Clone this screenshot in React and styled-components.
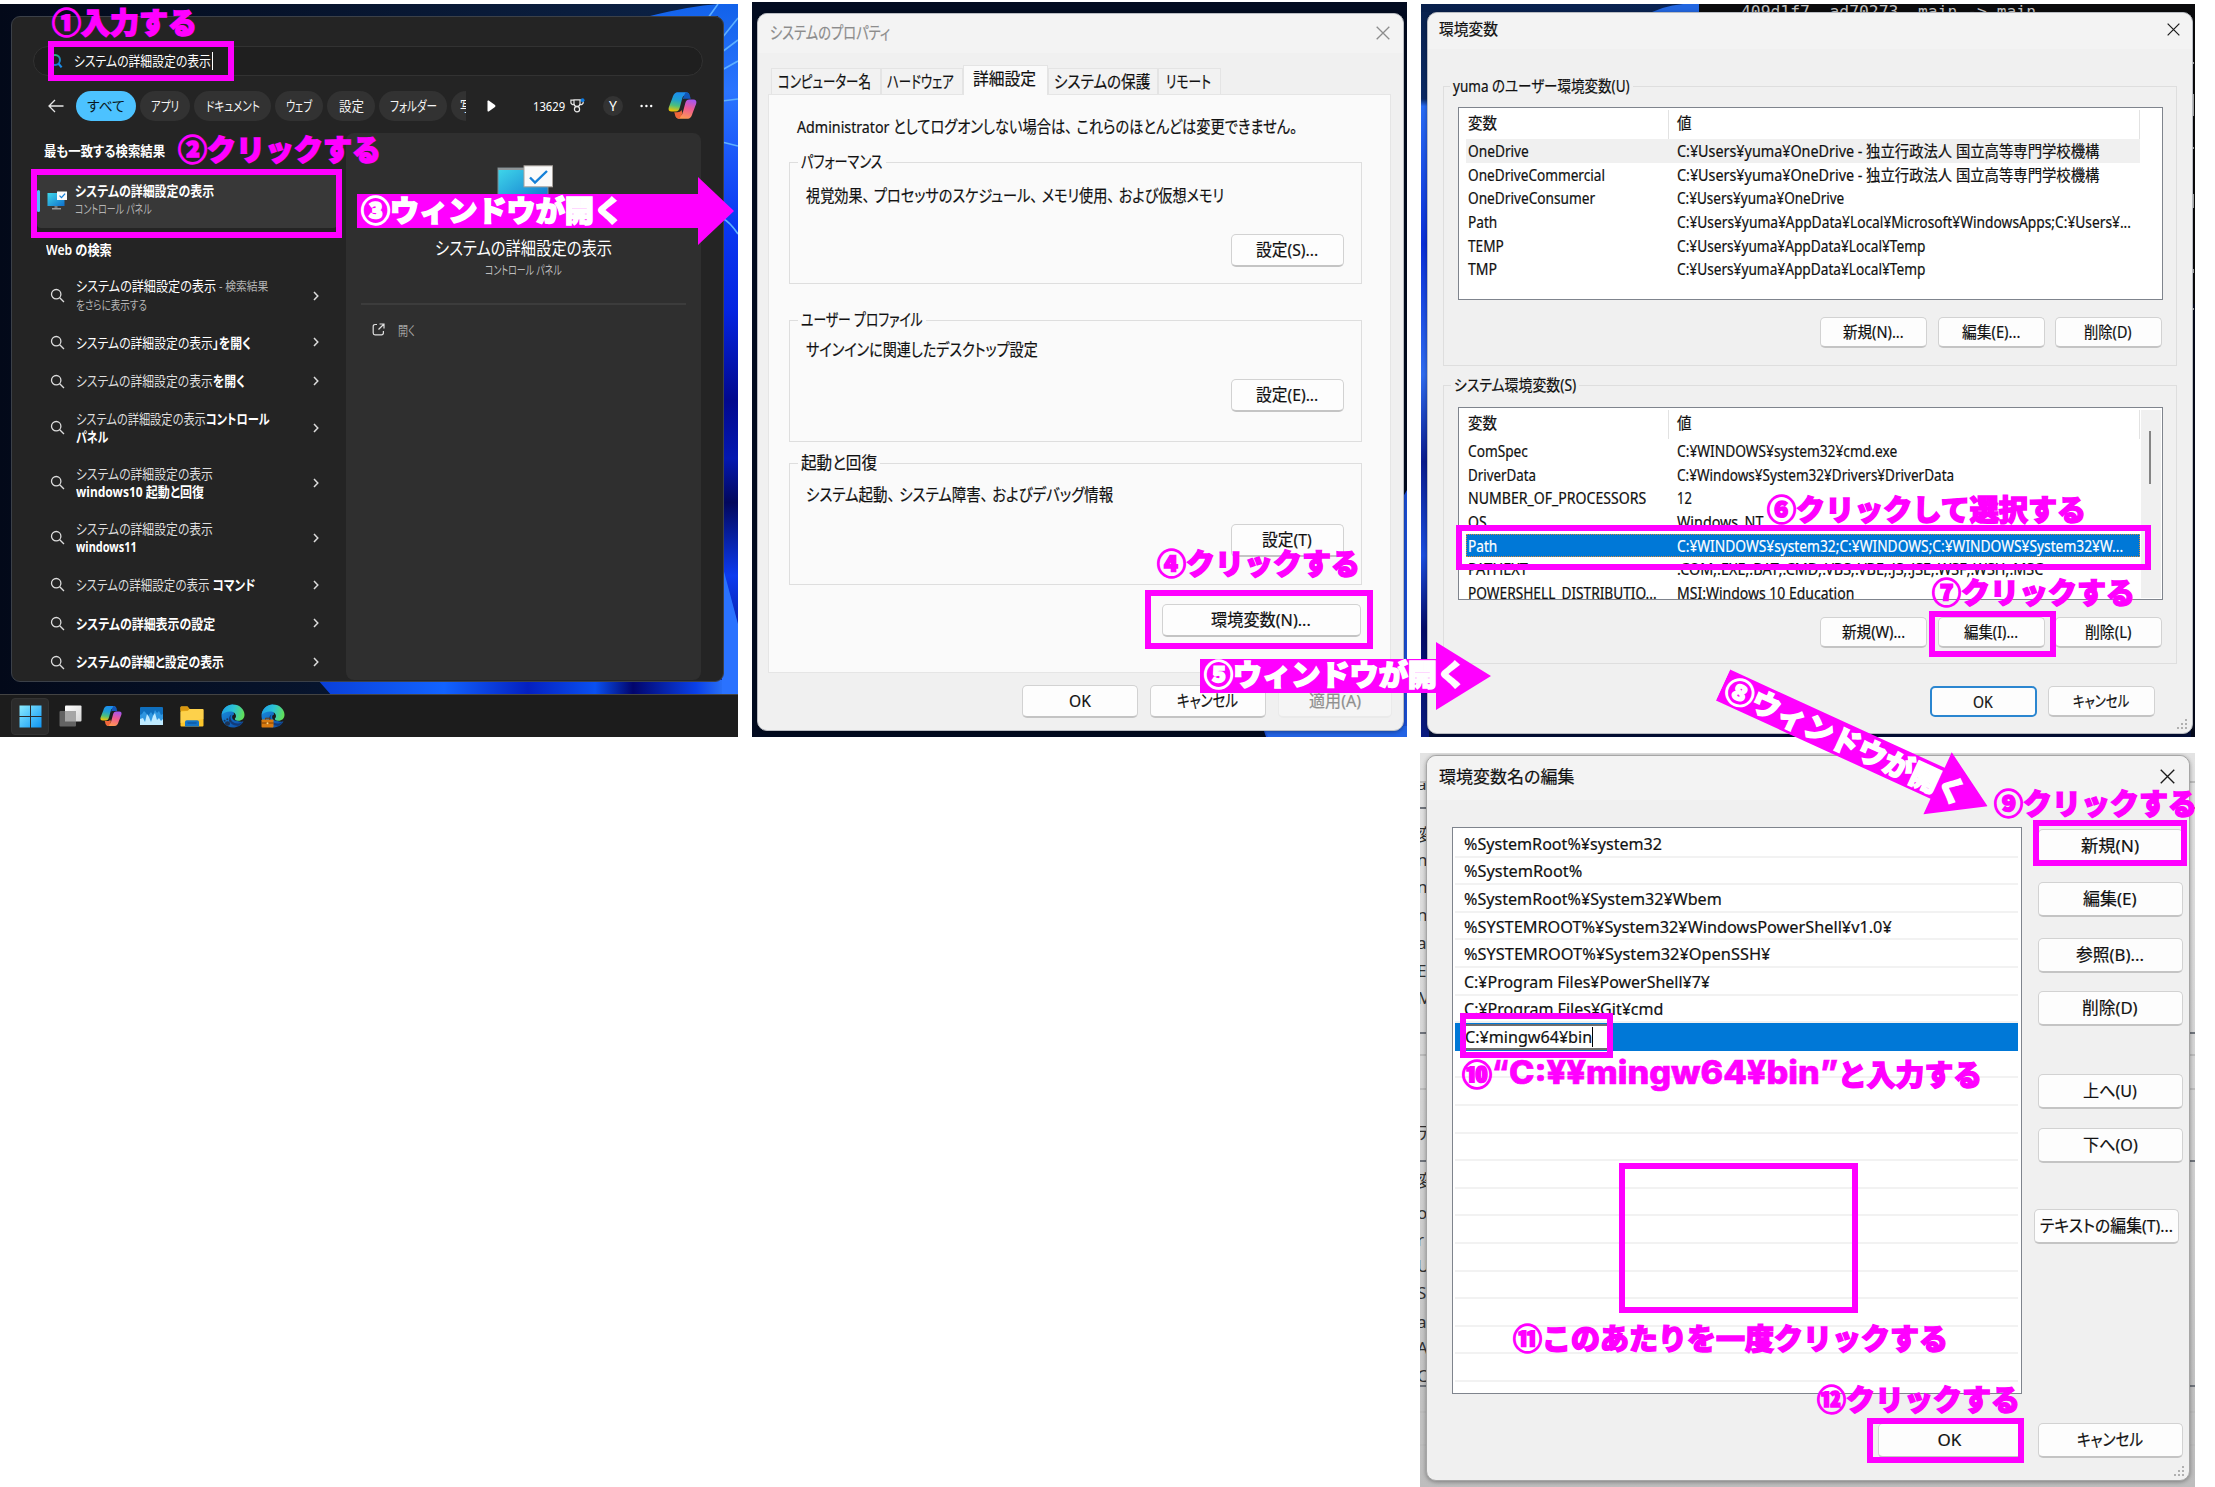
import React, { useLayoutEffect, useRef, useState } from "react";
import styled, { createGlobalStyle, css } from "styled-components";

const PINK = "#ff00ff";

const GlobalStyle = createGlobalStyle`
  * { box-sizing: border-box; }
  body {
    margin: 0;
    background: #fff;
    font-family: "Noto Sans", "Noto Sans CJK JP", sans-serif;
    font-feature-settings: "palt";
    color: #111;
  }
`;

/* ---------- text that fills a given width ---------- */

const FitBox = styled.span`
  display: inline-block;
  flex: none;
  white-space: nowrap;
  text-align: left;
`;
const FitInner = styled.span`
  display: inline-block;
  white-space: pre;
  transform-origin: 0 50%;
`;

function Fit({ w, children }) {
  const ref = useRef(null);
  const [scale, setScale] = useState(1);
  useLayoutEffect(() => {
    if (ref.current) setScale(w / ref.current.offsetWidth);
  }, [w]);
  return (
    <FitBox style={{ width: w }}>
      <FitInner ref={ref} style={{ transform: `scaleX(${scale})` }}>
        {children}
      </FitInner>
    </FitBox>
  );
}

const Comma = styled.span`
  margin-right: 0.3em;
`;
const withCommas = (text) =>
  text.split("、").map((part, i) => (
    <React.Fragment key={i}>
      {i > 0 && <Comma>、</Comma>}
      {part}
    </React.Fragment>
  ));

/* ---------- board ---------- */

const Board = styled.main`
  position: relative;
  width: 2215px;
  height: 1487px;
  padding-top: 4px;
  overflow: hidden;
  display: grid;
  grid-template-columns: 738px 655px 775px;
  grid-template-rows: 733px 734px;
  column-gap: 14px;
  row-gap: 16px;
  background: #fff;
`;
const Screen = styled.section`
  position: relative;
  overflow: hidden;
  display: flex;
  flex-direction: column;
  background: ${(p) => p.$bg};
  ${(p) => p.$area}
`;
const Wallpaper = styled.svg`
  position: absolute;
  inset: 0;
  width: 100%;
  height: 100%;
`;

/* ---------- search flyout ---------- */

const Flyout = styled.div`
  position: relative;
  width: 713px;
  height: 666px;
  margin: 12px 0 0 11px;
  border-radius: 9px;
  background: #242424;
  border: 1px solid #3b4048;
  color: #fff;
  display: flex;
  flex-direction: column;
  overflow: hidden;
`;
const SearchField = styled.div`
  width: 670px;
  height: 30px;
  flex: none;
  margin: 28.5px 0 0 21px;
  border-radius: 15px;
  border: 1px solid #323232;
  background: #1f1f1f;
  display: flex;
  align-items: center;
  padding-left: 15px;
  gap: 11px;
  font-size: 14px;
  line-height: 20px;
`;
const Caret = styled.i`
  width: 1px;
  height: ${(p) => p.$h}px;
  margin-left: ${(p) => p.$ml || 0}px;
  background: ${(p) => p.$c};
`;
const FilterRow = styled.div`
  height: 30px;
  flex: none;
  margin-top: 15px;
  padding-left: 36px;
  display: flex;
  align-items: center;
`;
const Pill = styled.span`
  width: ${(p) => p.$w}px;
  height: 30px;
  flex: none;
  margin-right: 4px;
  border-radius: 15px;
  background: ${(p) => (p.$on ? "#4cc2ff" : "#323232")};
  color: ${(p) => (p.$on ? "#0a1a24" : "#f4f4f4")};
  display: flex;
  align-items: center;
  justify-content: center;
  overflow: hidden;
  font-size: 13.5px;
  line-height: 20px;
  ${(p) =>
    p.$cut &&
    css`
      border-radius: 15px 0 0 15px;
      padding-left: 9px;
      justify-content: flex-start;
    `}
`;
const Points = styled.span`
  font-size: 13px;
  line-height: 20px;
`;
const Avatar = styled.span`
  width: 20px;
  height: 20px;
  margin: 0 17px 0 18px;
  border-radius: 50%;
  background: #333;
  font-size: 14px;
  line-height: 20px;
  text-align: center;
`;
const Spacer = styled.span`
  width: ${(p) => p.$w}px;
  flex: none;
`;
const FlyoutBody = styled.div`
  flex: 1;
  display: flex;
  margin-top: 12px;
`;
const Results = styled.div`
  width: 334px;
  display: flex;
  flex-direction: column;
`;
const Heading = styled.div`
  height: 20px;
  flex: none;
  margin: ${(p) => p.$m};
  font-size: 13.5px;
  font-weight: 600;
  line-height: 20px;
`;
const BestMatch = styled.div`
  width: 300px;
  height: 54px;
  flex: none;
  margin: 13px 0 0 25px;
  border-radius: 4px;
  background: #383838;
  display: flex;
  align-items: center;
  gap: 7px;
`;
const Accent = styled.i`
  width: 3px;
  height: 22px;
  border-radius: 2px;
  background: #4cc2ff;
`;
const TwoLines = styled.div`
  display: flex;
  flex-direction: column;
  font-size: 14px;
  line-height: 18.5px;
  b { font-weight: 700; color: #fff; }
`;
const Faint = styled.span`
  color: #b4b4b4;
  font-size: 12.5px;
`;
const Suggestion = styled.div`
  height: ${(p) => (p.$tall ? 55 : 38.7)}px;
  flex: none;
  padding-left: 38px;
  display: flex;
  align-items: center;
  color: ${(p) => (p.$bright ? "#fff" : "#dedede")};
  font-weight: ${(p) => (p.$strong ? 600 : 400)};
`;
const SuggestionText = styled(TwoLines)`
  width: 237px;
  margin-left: 10.5px;
  padding-top: 1px;
`;
const Preview = styled.div`
  width: 355px;
  height: 547px;
  border-radius: 8px;
  background: #2f2f2f;
  display: flex;
  flex-direction: column;
  align-items: center;
  padding-top: 32px;
`;
const PreviewArt = styled.div`
  height: 60px;
  margin-left: 4px;
`;
const PreviewTitle = styled.div`
  margin-top: 11px;
  font-size: 18px;
  line-height: 24px;
`;
const PreviewSub = styled.div`
  margin-top: 2px;
  line-height: 18px;
  font-size: 12.5px;
  color: #bdbdbd;
`;
const PreviewRule = styled.i`
  width: 325px;
  height: 2px;
  margin-top: 23px;
  background: #3c3c3c;
`;
const OpenRow = styled.div`
  align-self: stretch;
  margin: 15px 0 0 26px;
  height: 20px;
  display: flex;
  align-items: center;
  gap: 13px;
  font-size: 13px;
  line-height: 20px;
  color: #a6a6a6;
`;
const Taskbar = styled.div`
  position: relative;
  height: 43px;
  margin-top: 12px;
  background: #1c1c1c;
  border-top: 1px solid #434343;
  display: flex;
  align-items: center;
  padding-left: 11px;
`;
const TaskItem = styled.span`
  width: ${(p) => (p.$on ? 38 : 40.5)}px;
  height: 37px;
  margin-right: ${(p) => (p.$on ? 1.5 : 0)}px;
  border-radius: 4px;
  background: ${(p) => (p.$on ? "#2b2b2b" : "transparent")};
  border: ${(p) => (p.$on ? "1px solid #333" : "0")};
  display: flex;
  align-items: center;
  justify-content: center;
`;

/* ---------- classic dialogs ---------- */

const Dialog = styled.div`
  position: relative;
  width: ${(p) => p.$w}px;
  height: ${(p) => p.$h}px;
  margin: ${(p) => p.$m};
  border-radius: 10px;
  background: #f0f0f0;
  border: 1px solid ${(p) => p.$edge || "#b9bcc2"};
  box-shadow: 0 1px 4px rgba(0, 0, 0, 0.35);
  display: flex;
  flex-direction: column;
  font-size: ${(p) => p.$fs}px;
  line-height: 24px;
  -webkit-text-stroke: 0.2px currentColor;
`;
const TitleBar = styled.header`
  height: ${(p) => p.$h}px;
  flex: none;
  padding: 0 ${(p) => p.$pr}px ${(p) => p.$pb || 2}px ${(p) => p.$pl}px;
  border-radius: 10px 10px 0 0;
  background: #f3f3f3;
  color: ${(p) => p.$c || "#111"};
  display: flex;
  align-items: center;
  justify-content: space-between;
`;
const Button = styled.span`
  width: ${(p) => p.$w}px;
  height: ${(p) => p.$h}px;
  flex: none;
  margin: ${(p) => p.$m || 0};
  padding-right: 1px;
  border-radius: 5px;
  border: 1px solid #d2d2d2;
  border-bottom: 2px solid #c4c4c4;
  background: #fdfdfd;
  display: flex;
  align-items: center;
  justify-content: center;
  ${(p) =>
    p.$primary &&
    css`
      border: 2px solid #2b86d0;
    `}
  ${(p) =>
    p.$off &&
    css`
      color: #8f8f8f;
      background: #f5f5f5;
      border-color: #eaeaea;
    `}
`;
const Buttons = styled.div`
  display: flex;
  justify-content: flex-end;
  gap: ${(p) => p.$gap}px;
  margin: ${(p) => p.$m};
`;
const Group = styled.div`
  position: relative;
  flex: none;
  width: ${(p) => p.$w}px;
  height: ${(p) => p.$h}px;
  margin: ${(p) => p.$m};
  border: 1px solid #dedede;
  display: flex;
  flex-direction: column;
`;
const Legend = styled.span`
  position: absolute;
  top: -13px;
  left: ${(p) => p.$x}px;
  padding: 0 3px;
  background: ${(p) => p.$bg};
`;
const Tabs = styled.div`
  height: 29px;
  flex: none;
  margin: 12px 0 0 13px;
  display: flex;
  align-items: flex-end;
`;
const Tab = styled.span`
  position: relative;
  z-index: ${(p) => (p.$on ? 1 : 0)};
  width: ${(p) => p.$w}px;
  height: ${(p) => (p.$on ? 30 : 26)}px;
  margin-bottom: ${(p) => (p.$on ? -1 : 0)}px;
  padding: 0 2px ${(p) => (p.$on ? 4 : 0)}px 0;
  border: 1px solid #e4e4e4;
  border-bottom: 0;
  background: ${(p) => (p.$on ? "#fafafa" : "#f2f2f2")};
  display: flex;
  align-items: center;
  justify-content: center;
`;
const Page = styled.div`
  width: 623px;
  height: 579px;
  flex: none;
  margin-left: 10px;
  padding-top: 20px;
  background: #fafafa;
  border: 1px solid #e5e5e5;
  display: flex;
  flex-direction: column;
`;
const Line = styled.div`
  height: 24px;
  flex: none;
  margin: ${(p) => p.$m};
`;

const List = styled.div`
  position: relative;
  width: 705px;
  height: 193px;
  flex: none;
  margin: ${(p) => p.$m};
  padding-left: 7px;
  border: 1px solid #7f848d;
  background: #fff;
  overflow: hidden;
  display: flex;
  flex-direction: column;
`;
const ListRow = styled.div`
  width: 674px;
  height: ${(p) => p.$h || 23.65}px;
  flex: none;
  display: grid;
  grid-template-columns: 203px 471px;
  align-items: center;
  background: ${(p) => (p.$sel ? "#0078d7" : p.$hot ? "#f0f0f0" : "transparent")};
  color: ${(p) => (p.$sel ? "#fff" : "inherit")};
  outline: ${(p) => (p.$sel ? "1px dotted #d88a3a" : "none")};
  outline-offset: -1px;
`;
const Cell = styled.span`
  height: 24px;
  padding-left: ${(p) => p.$pl}px;
`;
const HeadCell = styled.span`
  height: ${(p) => p.$h}px;
  align-self: end;
  padding: 1px 0 0 ${(p) => p.$pl}px;
  border-right: 1px solid #e2e2e2;
`;
const ScrollTrack = styled.div`
  position: absolute;
  top: 2px;
  right: 1px;
  width: 20px;
  height: 188px;
  padding: 21px 0 0 8px;
  background: #f0f0f0;
`;
const ScrollThumb = styled.i`
  display: block;
  width: 2px;
  height: 53px;
  background: #858585;
`;
const Grip = styled.svg`
  position: absolute;
  right: 4px;
  bottom: 3px;
`;

const EditBody = styled.div`
  display: flex;
  margin: 27px 0 0 25px;
  height: 567px;
`;
const PathList = styled.div`
  width: 570px;
  height: 567px;
  padding: 2px 3px 0 2px;
  border: 1px solid #7f848d;
  background: #fff;
  overflow: hidden;
  display: flex;
  flex-direction: column;
`;
const PathRow = styled.div`
  height: 27.6px;
  flex: none;
  padding: 2px 0 0 9px;
  border-bottom: 2px solid #f2f2f2;
  display: flex;
  align-items: center;
  ${(p) =>
    p.$editing &&
    css`
      padding-top: 0;
      background: #0078d7;
      border-bottom: 0;
    `}
`;
const PathEdit = styled.span`
  width: 146px;
  height: 26px;
  padding-left: 1px;
  background: #fff;
  border: 2px solid #6e6e6e;
  border-width: 2px 0;
  display: flex;
  align-items: center;
`;
const SideButtons = styled.div`
  width: 145px;
  margin-left: 16px;
  padding-top: 2px;
  display: flex;
  flex-direction: column;
`;
const Sliver = styled.span`
  position: absolute;
  left: -3px;
  top: ${(p) => p.$y}px;
  color: #333;
  font-size: 17px;
  line-height: 20px;
`;
const EdgeTick = styled.i`
  position: absolute;
  right: 0;
  top: ${(p) => p.$y}px;
  width: 100%;
  height: 2px;
  background: ${(p) => p.$c};
`;
const TerminalText = styled.div`
  position: absolute;
  left: 320px;
  top: -2px;
  color: #c4c4c4;
  font-family: "DejaVu Sans Mono", monospace;
  font-size: 16px;
  line-height: 20px;
`;

/* ---------- callouts ---------- */

const Frame = styled.div`
  position: absolute;
  left: ${(p) => p.$x}px;
  top: ${(p) => p.$y}px;
  width: ${(p) => p.$w}px;
  height: ${(p) => p.$h}px;
  border: 6px solid ${PINK};
`;
const calloutText = css`
  font-family: "Noto Sans CJK JP", sans-serif;
  font-feature-settings: normal;
  font-weight: 900;
  font-size: 29px;
  line-height: 40px;
  height: 40px;
`;
const NoteText = styled.div`
  position: absolute;
  left: ${(p) => p.$x}px;
  top: ${(p) => p.$y - 22}px;
  color: ${PINK};
  -webkit-text-stroke: 1.5px ${PINK};
  display: flex;
  ${calloutText}
`;
const Latin = styled.span`
  font-family: Inter, sans-serif;
  font-weight: 800;
  font-size: 32px;
  -webkit-text-stroke: 0.7px ${PINK};
`;
const ArrowBox = styled.div`
  position: absolute;
  left: ${(p) => p.$x}px;
  top: ${(p) => p.$y - 35}px;
  width: ${(p) => p.$w}px;
  padding-left: 4px;
  display: flex;
  align-items: center;
  transform: rotate(${(p) => p.$deg || 0}deg);
  transform-origin: 0 50%;
  color: #fff;
  -webkit-text-stroke: 1.5px #fff;
  ${calloutText}
  height: 70px;
`;
const ArrowShape = styled.svg`
  position: absolute;
  inset: 0;
`;
const ArrowLabel = styled.span`
  position: relative;
  margin-top: -5px;
`;

function Note({ x, y, w, children }) {
  return (
    <NoteText $x={x} $y={y}>
      {w ? <Fit w={w}>{children}</Fit> : children}
    </NoteText>
  );
}
function Arrow({ x, y, w, head, deg, children }) {
  const b = w - head;
  return (
    <ArrowBox $x={x} $y={y} $w={w} $deg={deg}>
      <ArrowShape width={w} height="70">
        <polygon
          fill={PINK}
          points={`0,18 ${b},18 ${b},1 ${w},35 ${b},69 ${b},52 0,52`}
        />
      </ArrowShape>
      <ArrowLabel>
        <Fit w={262}>{children}</Fit>
      </ArrowLabel>
    </ArrowBox>
  );
}

/* ---------- icons ---------- */

const Magnifier = () => (
  <svg width="15" height="15" viewBox="0 0 15 15" fill="none" stroke="#dcdcdc" strokeWidth="1.3">
    <circle cx="6.2" cy="6.2" r="4.7" />
    <path d="M9.7 9.7 14 14" />
  </svg>
);
const ColorMagnifier = () => (
  <svg width="14" height="16" viewBox="0 0 14 16" fill="none">
    <defs>
      <linearGradient id="mag" x1="0" y1="0" x2="0.6" y2="1">
        <stop offset="0" stopColor="#35c86b" />
        <stop offset="1" stopColor="#1478d4" />
      </linearGradient>
    </defs>
    <circle cx="6" cy="7" r="5" stroke="url(#mag)" strokeWidth="2" />
    <path d="M9.6 10.8 12.6 14.4" stroke="#1a8be8" strokeWidth="2.2" />
  </svg>
);
const Chevron = () => (
  <svg width="6" height="10" viewBox="0 0 6 10" fill="none" stroke="#dcdcdc" strokeWidth="1.5">
    <path d="M1 1 4.8 5 1 9" />
  </svg>
);
const BackArrow = () => (
  <svg width="16" height="14" viewBox="0 0 16 14" fill="none" stroke="#e6e6e6" strokeWidth="1.3">
    <path d="M15.5 7H1M7 1 1 7l6 6" />
  </svg>
);
const Play = () => (
  <svg width="9" height="12" viewBox="0 0 9 12" fill="#fff">
    <path d="M0.5 1.2Q0.5 0 1.7 0.6L8 5.1Q9 6 8 6.9L1.7 11.4Q0.5 12 0.5 10.8Z" />
  </svg>
);
const Trophy = () => (
  <svg width="15" height="15" viewBox="0 0 15 15" fill="none" stroke="#e6e6e6" strokeWidth="1.2">
    <path d="M4 1.8h6v3.6a3 3 0 0 1-6 0zM4 2.2H.9v2.2c0 1.6 1.4 2.2 3.2 2.2M10 2.2h3.2v2.2c0 1.6-1.4 2.2-3.2 2.2" />
    <circle cx="7" cy="11.3" r="2.6" />
    <circle cx="12.6" cy="2.2" r="1.9" fill="#0f7be0" stroke="none" />
  </svg>
);
const Dots = () => (
  <svg width="13" height="4" viewBox="0 0 13 4" fill="#fff">
    <circle cx="1.6" cy="2" r="1.2" />
    <circle cx="6.4" cy="2" r="1.2" />
    <circle cx="11.2" cy="2" r="1.2" />
  </svg>
);
const Copilot = ({ size }) => (
  <svg width={size} height={size} viewBox="0 0 28 28">
    <defs>
      <linearGradient id="cpA" x1="0.5" y1="0" x2="0.3" y2="1">
        <stop offset="0" stopColor="#1c8df0" />
        <stop offset="0.4" stopColor="#1f9fd0" />
        <stop offset="0.7" stopColor="#4cbf7c" />
        <stop offset="1" stopColor="#f5c400" />
      </linearGradient>
      <linearGradient id="cpB" x1="0.7" y1="0" x2="0.4" y2="1">
        <stop offset="0" stopColor="#a655f0" />
        <stop offset="0.45" stopColor="#ee5a93" />
        <stop offset="1" stopColor="#ff9a50" />
      </linearGradient>
    </defs>
    <path d="M17 1.2h-7.4C6.4 1.2 5.2 3.6 4.3 6.6L.8 15.6C0 18.3 1 19.8 3.6 19.8h3.6c2.6 0 3.5-1.4 4.2-3.9l2.5-9.3c.5-1.7 1.4-2.3 3-2.3h4.1C20.3 2.4 19.3 1.2 17 1.2Z" fill="url(#cpA)" />
    <path d="M17 1.2c2.3 0 3.3 1.2 4 3.1l1 3.3h-5c-2 0-3 .2-3.5 2L15.6 4Z" fill="#1257b8" />
    <path d="M11 26.8h7.4c3.2 0 4.4-2.4 5.3-5.4l3.5-9c.8-2.7-.2-4.2-2.8-4.2h-3.6c-2.6 0-3.5 1.4-4.2 3.9l-2.5 9.3c-.5 1.7-1.4 2.3-3 2.3H7C7.7 25.6 8.7 26.8 11 26.8Z" fill="url(#cpB)" />
    <path d="M11 26.8c-2.3 0-3.3-1.2-4-3.1l-1-3.3h3c2.2 0 3.3-.4 4-2l1 3.2Z" fill="#f0663a" />
  </svg>
);
const MonitorIcon = () => (
  <svg width="21" height="20" viewBox="0 0 21 20">
    <defs>
      <linearGradient id="mon" x1="0" y1="0" x2="1" y2="1">
        <stop offset="0" stopColor="#3fd8ea" />
        <stop offset="1" stopColor="#0f6fcc" />
      </linearGradient>
    </defs>
    <rect x="0.5" y="2" width="17" height="13" fill="url(#mon)" />
    <rect x="7.5" y="15" width="3" height="2.5" fill="#777" />
    <rect x="5" y="17" width="9" height="1.5" fill="#9a9a9a" />
    <rect x="10" y="0.5" width="10" height="8.5" fill="#fafafa" />
    <path d="m12.5 4.6 2 2 3.6-4" fill="none" stroke="#1580d8" strokeWidth="1.3" />
  </svg>
);
const PreviewIcon = () => (
  <svg width="57" height="60" viewBox="0 0 57 60">
    <rect x="1" y="3" width="50" height="36" fill="url(#mon)" stroke="#7a8a90" />
    <rect x="1" y="3" width="50" height="2" fill="#8e9496" />
    <rect x="18" y="40" width="16" height="14" fill="#777" />
    <rect x="27" y="0.8" width="28.5" height="21" fill="#fafafa" stroke="#a8a29c" />
    <path d="m33 12.5 5 5L50 6" fill="none" stroke="#1580d8" strokeWidth="2.4" />
  </svg>
);
const OpenIcon = () => (
  <svg width="13" height="13" viewBox="0 0 13 13" fill="none" stroke="#e0e0e0" strokeWidth="1.2">
    <path d="M5 1.5H3a1.8 1.8 0 0 0-1.8 1.8V10A1.8 1.8 0 0 0 3 11.8h6.6A1.8 1.8 0 0 0 11.4 10V8M7.5 1h4.5v4.5M12 1 6.5 6.5" />
  </svg>
);
const StartIcon = () => (
  <svg width="23" height="23" viewBox="0 0 23 23">
    <defs>
      <linearGradient id="win" x1="0" y1="0" x2="1" y2="1">
        <stop offset="0" stopColor="#8cecff" />
        <stop offset="1" stopColor="#0d95f5" />
      </linearGradient>
    </defs>
    <path fill="url(#win)" d="M.5 .5h10.5v10.5H.5zM12 .5h10.5v10.5H12zM.5 12h10.5v10.5H.5zM12 12h10.5v10.5H12z" />
  </svg>
);
const TaskViewIcon = () => (
  <svg width="23" height="22" viewBox="0 0 23 22">
    <defs>
      <linearGradient id="tv" x1="0" y1="0" x2="1" y2="1">
        <stop offset="0" stopColor="#fff" />
        <stop offset="1" stopColor="#d5d5d5" />
      </linearGradient>
    </defs>
    <rect x="6" y="0.5" width="16.5" height="16" rx="1" fill="url(#tv)" />
    <rect x="0.5" y="6" width="16.5" height="15.5" rx="1" fill="#636363" />
    <rect x="6" y="6" width="11" height="10.5" fill="#a6a6a6" />
  </svg>
);
const MonitorChartIcon = () => (
  <svg width="23" height="18" viewBox="0 0 23 18">
    <rect width="23" height="18" rx="1" fill="#0f6fbe" />
    <path d="M0 8l2-1 2-3 2 2 2 3 3-4 2 3 2-5 2 3 2-2 2 4 2-1v11H0z" fill="#2f96e0" />
    <path d="M0 12l3-1 2 4 2-8 2 3 2 5 2-6 2-3 2 7 2-2 2 3 2-2v6H0z" fill="#bfeaff" />
  </svg>
);
const FolderIcon = () => (
  <svg width="24" height="21" viewBox="0 0 24 21">
    <path d="M.5 1.5Q.5 .5 1.5 .5h6l2 2.5H22.5Q23.5 3 23.5 4v15.5q0 1-1 1H1.5q-1 0-1-1z" fill="#fbc62c" />
    <path d="M.5 1.5Q.5 .5 1.5 .5h6l2 2.5L8 4.8H.5z" fill="#d9960f" />
    <path d="M.5 6 8 4.8 9.5 3H22.5Q23.5 3 23.5 4v9L.5 17z" fill="#ffd860" opacity="0.6" />
    <path d="M5 20.5V16q0-1.8 1.8-1.8h10.4Q19 14.2 19 16v4.5z" fill="#1475c8" />
    <path d="M7.5 17h9" stroke="#0b4f93" />
  </svg>
);
const EdgeIcon = ({ work }) => (
  <svg width="24" height="24" viewBox="0 0 24 24">
    <defs>
      <linearGradient id="egA" x1="0" y1="0.3" x2="1" y2="0.5">
        <stop offset="0" stopColor="#1ea0e6" />
        <stop offset="0.5" stopColor="#2cc3d4" />
        <stop offset="1" stopColor="#62e055" />
      </linearGradient>
      <linearGradient id="egB" x1="0" y1="0" x2="0.8" y2="1">
        <stop offset="0" stopColor="#1b96e6" />
        <stop offset="1" stopColor="#0c4fa8" />
      </linearGradient>
    </defs>
    <path d="M.5 12C.5 5.5 5.7.5 12 .5L13 11c-1 3 2 7.5 9.5 6.5C20.5 21.3 16.6 23.5 12 23.5 5.7 23.5.5 18.5.5 12Z" fill="url(#egB)" />
    <path d="M10.5 10.5c-1.5 2-1.3 5 .8 7 2.7 2.5 7 2.6 10.7.2-.8 1.5-2 2.8-3.5 3.8-5 1-9.5-1.5-10.3-5.5-.5-2.5.5-4.5 2.3-5.5Z" fill="#123a78" />
    <path d="M.7 10.5C1.5 4.5 6.3.5 12 .5c6.7 0 11.5 5 11.5 10.3 0 3.7-2.7 6-6 6-2.3 0-3.7-.8-3.7-1.8 0-.8 1.1-1.2 1.1-3C14.9 9.4 12.6 7.5 9 7.5 5.5 7.5 2.2 9 .7 10.5Z" fill="url(#egA)" />
    <path d="M11.5 11.5c.8-1.2 3-1 3.2.8.1 1.3-1 1.8-.9 2.7.1.9 1.3 1.6 3 1.8-3.5.4-6.8-2.3-5.3-5.3Z" fill="#1c1c1c" />
    {work ? (
      <g>
        <rect x="0.5" y="15.5" width="12" height="8" rx="0.8" fill="#d97a10" />
        <path d="M.5 19h12M4.5 15.5v-1.3h4v1.3" stroke="#7a3f05" fill="none" />
        <circle cx="6.5" cy="19.3" r="1" fill="#ffd680" />
      </g>
    ) : (
      <g fill="#1d3557">
        <ellipse cx="6.5" cy="19.5" rx="2.6" ry="2.2" />
        <circle cx="3.6" cy="16.8" r="1" />
        <circle cx="6.3" cy="15.3" r="1" />
        <circle cx="9" cy="16.8" r="1" />
      </g>
    )}
  </svg>
);
const CloseIcon = ({ w = 14, h = 14, c = "#1a1a1a" }) => (
  <svg width={w} height={h} viewBox="0 0 14 14" preserveAspectRatio="none" fill="none" stroke={c} strokeWidth="1.3">
    <path d="M.7.7l12.6 12.6M13.3.7.7 13.3" />
  </svg>
);
const ResizeGrip = () => (
  <Grip width="11" height="11" viewBox="0 0 11 11" fill="#b0b0b0">
    <path d="M8 0h2v2H8zM8 4h2v2H8zM8 8h2v2H8zM4 4h2v2H4zM4 8h2v2H4zM0 8h2v2H0z" />
  </Grip>
);

/* ---------- search screen ---------- */

const pills = [
  ["すべて", 60.5, 38],
  ["アプリ", 50, 28],
  ["ドキュメント", 77, 54],
  ["ウェブ", 48, 26],
  ["設定", 48, 25],
  ["フォルダー", 68, 47],
];

const T = "システムの詳細設定の表示";
const suggestions = [
  { tall: true, bright: true, lines: [[<>{T}<Faint> - 検索結果</Faint></>, 192], [<Faint>をさらに表示する</Faint>, 71]] },
  { bright: true, lines: [[<>{T}<b>」を開く</b></>, 175]] },
  { lines: [[<>{T}<b>を開く</b></>, 169]] },
  { tall: true, lines: [[<>{T}<b>コントロール</b></>, 194], [<b>パネル</b>, 32]] },
  { tall: true, lines: [[T, 137], [<b>windows10 起動と回復</b>, 128]] },
  { tall: true, lines: [[T, 137], [<b>windows11</b>, 61]] },
  { lines: [[<>{T} <b>コマンド</b></>, 179]] },
  { bright: true, strong: true, lines: [["システムの詳細表示の設定", 139]] },
  { bright: true, strong: true, lines: [["システムの詳細と設定の表示", 148]] },
];

function SearchScreen() {
  return (
    <Screen $bg="#040c1f">
      <Wallpaper viewBox="0 0 738 733" preserveAspectRatio="none">
        <defs>
          <linearGradient id="navy" x1="0" x2="1">
            <stop offset="0" stopColor="#030919" />
            <stop offset="1" stopColor="#0c2348" />
          </linearGradient>
          <linearGradient id="bloomV" x1="0" y1="0" x2="0" y2="1">
            <stop offset="0" stopColor="#1262ea" />
            <stop offset="0.12" stopColor="#2a74ff" />
            <stop offset="0.3" stopColor="#0a38f2" />
            <stop offset="0.42" stopColor="#0424e0" />
            <stop offset="0.54" stopColor="#02098e" />
            <stop offset="0.62" stopColor="#0418b0" />
            <stop offset="0.68" stopColor="#03085c" />
            <stop offset="0.78" stopColor="#0c3bf0" />
            <stop offset="0.9" stopColor="#04107e" />
            <stop offset="1" stopColor="#1560f0" />
          </linearGradient>
          <linearGradient id="bloomH" x1="0" x2="1">
            <stop offset="0" stopColor="#0a3fd8" />
            <stop offset="0.3" stopColor="#1263ff" />
            <stop offset="0.5" stopColor="#0420c0" />
            <stop offset="0.66" stopColor="#0a50f0" />
            <stop offset="0.75" stopColor="#02056c" />
            <stop offset="0.9" stopColor="#0a40e8" />
            <stop offset="1" stopColor="#3a8bff" />
          </linearGradient>
        </defs>
        <rect width="738" height="733" fill="url(#navy)" />
        <path d="M650 12 Q690 2 718 0H738V733H718V12Z" fill="url(#bloomV)" />
        <path d="M318 676 332 692H738V676Z" fill="url(#bloomH)" />
        <path d="M718 0 708 14M738 14 722 34M738 36 722 48M738 57 722 66M738 95 722 97M738 142 722 138M722 214Q730 218 738 230" stroke="#5fb0ff" strokeWidth="1.6" fill="none" />
        <path d="M722 560 738 620V692H722Z" fill="#2a72ff" />
      </Wallpaper>
      <Flyout>
        <SearchField>
          <ColorMagnifier />
          <Fit w={137}>{T}</Fit>
          <Caret $h={18} $ml={-10} $c="#fff" />
        </SearchField>
        <FilterRow>
          <BackArrow />
          <Spacer $w={11.5} />
          {pills.map(([label, w, tw], i) => (
            <Pill key={label} $w={w} $on={i === 0}>
              <Fit w={tw}>{label}</Fit>
            </Pill>
          ))}
          <Pill $w={15} $cut>
            <Fit w={12}>写</Fit>
          </Pill>
          <Spacer $w={17} />
          <Play />
          <Spacer $w={37} />
          <Points>
            <Fit w={32}>13629</Fit>
          </Points>
          <Spacer $w={5} />
          <Trophy />
          <Avatar>Y</Avatar>
          <Dots />
          <Spacer $w={15} />
          <Copilot size={29} />
        </FilterRow>
        <FlyoutBody>
          <Results>
            <Heading $m="8px 0 0 32px">
              <Fit w={121}>最も一致する検索結果</Fit>
            </Heading>
            <BestMatch>
              <Accent />
              <MonitorIcon />
              <TwoLines>
                <Fit w={139}>
                  <b>{T}</b>
                </Fit>
                <Faint>
                  <Fit w={77}>コントロール パネル</Fit>
                </Faint>
              </TwoLines>
            </BestMatch>
            <Heading $m="12px 0 8.5px 34px">
              <Fit w={66}>Web の検索</Fit>
            </Heading>
            {suggestions.map((s, i) => (
              <Suggestion key={i} $tall={s.tall} $strong={s.strong} $bright={s.bright}>
                <Magnifier />
                <SuggestionText>
                  {s.lines.map(([t, w], j) => (
                    <Fit key={j} w={w}>{t}</Fit>
                  ))}
                </SuggestionText>
                <Chevron />
              </Suggestion>
            ))}
          </Results>
          <Preview>
            <PreviewArt>
              <PreviewIcon />
            </PreviewArt>
            <PreviewTitle>
              <Fit w={177}>{T}</Fit>
            </PreviewTitle>
            <PreviewSub>
              <Fit w={77}>コントロール パネル</Fit>
            </PreviewSub>
            <PreviewRule />
            <OpenRow>
              <OpenIcon />
              <Fit w={17}>開く</Fit>
            </OpenRow>
          </Preview>
        </FlyoutBody>
      </Flyout>
      <Taskbar>
        <TaskItem $on><StartIcon /></TaskItem>
        <TaskItem><TaskViewIcon /></TaskItem>
        <TaskItem><Copilot size={22} /></TaskItem>
        <TaskItem><MonitorChartIcon /></TaskItem>
        <TaskItem><FolderIcon /></TaskItem>
        <TaskItem><EdgeIcon /></TaskItem>
        <TaskItem><EdgeIcon work /></TaskItem>
      </Taskbar>
    </Screen>
  );
}

/* ---------- system properties ---------- */

const tabs = [
  ["コンピューター名", 109.5, 93],
  ["ハードウェア", 82, 67],
  ["詳細設定", 85, 63],
  ["システムの保護", 110, 96],
  ["リモート", 63, 45],
];
const groups = [
  { label: "パフォーマンス", lw: 82, desc: "視覚効果、プロセッサのスケジュール、メモリ使用、および仮想メモリ", dw: 418, btn: "設定(S)...", bw: 62, h: 122, m: "23px 0 0 20px", pt: 21, bt: 26 },
  { label: "ユーザー プロファイル", lw: 122, desc: "サインインに関連したデスクトップ設定", dw: 232, btn: "設定(E)...", bw: 62, h: 122, m: "36px 0 0 20px", pt: 17, bt: 17 },
  { label: "起動と回復", lw: 76, desc: "システム起動、システム障害、およびデバッグ情報", dw: 307, btn: "設定(T)", bw: 50, h: 122, m: "21px 0 0 20px", pt: 19, bt: 17 },
];

function PropertiesScreen() {
  return (
    <Screen $bg="#020b20" $area="margin-top:-2px;">
      <Wallpaper viewBox="0 0 655 735" preserveAspectRatio="none">
        <path d="M648 500 655 488V735H514L511 726 648 735Z" fill="#1c50d8" />
        <path d="M511 724H655V735H516Z" fill="#2363e4" />
      </Wallpaper>
      <Dialog $w={647} $h={718} $m="11px 0 0 5px" $fs={17}>
        <TitleBar $h={39} $pl={12} $pr={13} $c="#8c8c8c">
          <Fit w={120}>システムのプロパティ</Fit>
          <CloseIcon c="#8c8c8c" />
        </TitleBar>
        <Tabs>
          {tabs.map(([t, w, tw], i) => (
            <Tab key={t} $w={w} $on={i === 2}>
              <Fit w={tw}>{t}</Fit>
            </Tab>
          ))}
        </Tabs>
        <Page>
          <Line $m="0 0 0 28px">
            <Fit w={500}>{withCommas("Administrator としてログオンしない場合は、これらのほとんどは変更できません。")}</Fit>
          </Line>
          {groups.map((g) => (
            <Group key={g.label} $w={573} $h={g.h} $m={g.m}>
              <Legend $x={8} $bg="#fafafa">
                <Fit w={g.lw}>{g.label}</Fit>
              </Legend>
              <Line $m={`${g.pt}px 0 0 16px`}>
                <Fit w={g.dw}>{withCommas(g.desc)}</Fit>
              </Line>
              <Buttons $gap={0} $m={`${g.bt}px 17px 0 0`}>
                <Button $w={113} $h={33}>
                  <Fit w={g.bw}>{g.btn}</Fit>
                </Button>
              </Buttons>
            </Group>
          ))}
          <Buttons $gap={0} $m="19px 29px 0 0">
            <Button $w={199} $h={33}>
              <Fit w={100}>環境変数(N)...</Fit>
            </Button>
          </Buttons>
        </Page>
        <Buttons $gap={12} $m="12px 11px 0 0">
          <Button $w={116} $h={33}><Fit w={22}>OK</Fit></Button>
          <Button $w={116} $h={33}><Fit w={61}>キャンセル</Fit></Button>
          <Button $w={114} $h={33} $off><Fit w={52}>適用(A)</Fit></Button>
        </Buttons>
      </Dialog>
    </Screen>
  );
}

/* ---------- environment variables ---------- */

const userVars = [
  ["OneDrive", 61, "C:¥Users¥yuma¥OneDrive - 独立行政法人 国立高等専門学校機構", 422],
  ["OneDriveCommercial", 137, "C:¥Users¥yuma¥OneDrive - 独立行政法人 国立高等専門学校機構", 422],
  ["OneDriveConsumer", 127, "C:¥Users¥yuma¥OneDrive", 167],
  ["Path", 29, "C:¥Users¥yuma¥AppData¥Local¥Microsoft¥WindowsApps;C:¥Users¥...", 454],
  ["TEMP", 36, "C:¥Users¥yuma¥AppData¥Local¥Temp", 248],
  ["TMP", 29, "C:¥Users¥yuma¥AppData¥Local¥Temp", 248],
];
const systemVars = [
  ["ComSpec", 60, "C:¥WINDOWS¥system32¥cmd.exe", 220],
  ["DriverData", 68, "C:¥Windows¥System32¥Drivers¥DriverData", 277],
  ["NUMBER_OF_PROCESSORS", 178, "12", 15],
  ["OS", 19, "Windows_NT", 86],
  ["Path", 29, "C:¥WINDOWS¥system32;C:¥WINDOWS;C:¥WINDOWS¥System32¥W...", 446],
  ["PATHEXT", 60, ".COM;.EXE;.BAT;.CMD;.VBS;.VBE;.JS;.JSE;.WSF;.WSH;.MSC", 366],
  ["POWERSHELL_DISTRIBUTIO...", 189, "MSI:Windows 10 Education", 177],
];

function VarList({ rows, hot, sel, m, scroll }) {
  return (
    <List $m={m}>
      <ListRow $h={31}>
        <HeadCell $h={29} $pl={2}><Fit w={29}>変数</Fit></HeadCell>
        <HeadCell $h={29} $pl={8}><Fit w={15}>値</Fit></HeadCell>
      </ListRow>
      {rows.map(([n, nw, v, vw], i) => (
        <ListRow key={n} $hot={i === hot} $sel={i === sel}>
          <Cell $pl={2}><Fit w={nw}>{n}</Fit></Cell>
          <Cell $pl={8}><Fit w={vw}>{v}</Fit></Cell>
        </ListRow>
      ))}
      {scroll && (
        <ScrollTrack>
          <ScrollThumb />
        </ScrollTrack>
      )}
    </List>
  );
}

function VariablesScreen() {
  return (
    <Screen $bg="#04103a" $area="width:774px;">
      <Wallpaper viewBox="0 0 774 733" preserveAspectRatio="none">
        <defs>
          <linearGradient id="top3" x1="0" x2="1">
            <stop offset="0" stopColor="#08204c" />
            <stop offset="1" stopColor="#0d2a60" />
          </linearGradient>
          <linearGradient id="left3" x1="0" y1="0" x2="0" y2="1">
            <stop offset="0" stopColor="#0a2350" />
            <stop offset="0.12" stopColor="#0b2a66" />
            <stop offset="0.13" stopColor="#2a6cf4" />
            <stop offset="0.32" stopColor="#0a2fd8" />
            <stop offset="0.5" stopColor="#2f6cf0" />
            <stop offset="0.62" stopColor="#0a1c90" />
            <stop offset="0.75" stopColor="#1c4fe0" />
            <stop offset="0.85" stopColor="#050c6a" />
            <stop offset="1" stopColor="#0a1c80" />
          </linearGradient>
        </defs>
        <rect width="774" height="12" fill="url(#top3)" />
        <path d="M224 12Q240 2 262 0H280V12Z" fill="#2266e0" />
        <rect x="278" width="496" height="400" fill="#0b0b0d" />
        <rect y="8" width="8" height="725" fill="url(#left3)" />
        <rect x="770" y="300" width="4" height="433" fill="#060a1c" />
        <path d="M772 58v2M772 90v22M772 143v2M772 190v14M772 265v4M772 304v2" stroke="#b8b8b8" strokeWidth="2" />
      </Wallpaper>
      <TerminalText>
        <Fit w={295}>409d1f7..ad70273  main -&gt; main</Fit>
      </TerminalText>
      <Dialog $w={766} $h={722} $m="8px 0 0 6px" $fs={15.5}>
        <TitleBar $h={36} $pl={11} $pr={12} $pb={4}>
          <Fit w={59}>環境変数</Fit>
          <CloseIcon w={13} h={13} />
        </TitleBar>
        <Group $w={734} $h={280} $m="37px 0 0 15px">
          <Legend $x={6} $bg="#f0f0f0"><Fit w={177}>yuma のユーザー環境変数(U)</Fit></Legend>
          <VarList rows={userVars} hot={0} m="20px 0 0 14px" />
          <Buttons $gap={10.5} $m="17px 14px 0 0">
            <Button $w={107} $h={31}><Fit w={61}>新規(N)...</Fit></Button>
            <Button $w={107} $h={31}><Fit w={58}>編集(E)...</Fit></Button>
            <Button $w={107} $h={31}><Fit w={48}>削除(D)</Fit></Button>
          </Buttons>
        </Group>
        <Group $w={734} $h={279} $m="19px 0 0 15px">
          <Legend $x={7} $bg="#f0f0f0"><Fit w={122}>システム環境変数(S)</Fit></Legend>
          <VarList rows={systemVars} sel={4} m="21px 0 0 14px" scroll />
          <Buttons $gap={10.5} $m="17px 14px 0 0">
            <Button $w={107} $h={31}><Fit w={63}>新規(W)...</Fit></Button>
            <Button $w={107} $h={31}><Fit w={54}>編集(I)...</Fit></Button>
            <Button $w={107} $h={31}><Fit w={46}>削除(L)</Fit></Button>
          </Buttons>
        </Group>
        <Buttons $gap={11} $m="22px 37px 0 0">
          <Button $w={107} $h={31} $primary><Fit w={20}>OK</Fit></Button>
          <Button $w={107} $h={31}><Fit w={56}>キャンセル</Fit></Button>
        </Buttons>
        <ResizeGrip />
      </Dialog>
    </Screen>
  );
}

/* ---------- path editor ---------- */

const paths = [
  ["%SystemRoot%¥system32", 198],
  ["%SystemRoot%", 118],
  ["%SystemRoot%¥System32¥Wbem", 258],
  ["%SYSTEMROOT%¥System32¥WindowsPowerShell¥v1.0¥", 428],
  ["%SYSTEMROOT%¥System32¥OpenSSH¥", 306],
  ["C:¥Program Files¥PowerShell¥7¥", 246],
  ["C:¥Program Files¥Git¥cmd", 199],
];
const slivers = [
  ["a", 21], ["変", 72], ["n", 97], ["n", 124], ["n", 152], ["a", 180], ["E", 208], ["M", 235],
  ["テ", 370], ["変", 418], ["o", 450], ["r", 477], ["U", 503], ["S", 530], ["a", 559], ["A", 585], ["C", 613],
];
const side = [
  ["新規(N)", 58, 34, 0],
  ["編集(E)", 54, 35, "19px 0 0"],
  ["参照(B)...", 68, 35, "21px 0 0"],
  ["削除(D)", 56, 35, "18px 0 0"],
  ["上へ(U)", 54, 35, "48px 0 0"],
  ["下へ(O)", 55, 35, "19px 0 0"],
  ["テキストの編集(T)...", 133, 35, "46px 0 0 -4px"],
];

function EditScreen() {
  return (
    <Screen $bg="linear-gradient(#e3e3e3, #cfcfcf 60%, #bdbdbd)" $area="grid-column:3; margin-left:-1px; width:775px;">
      {slivers.map(([c, y]) => (
        <Sliver key={y} $y={y}>{c}</Sliver>
      ))}
      {[54, 279, 407, 632].map((y) => <EdgeTick key={y} $y={y} $c="#70747c" />)}
      {[28, 301, 335, 658, 691].map((y) => <EdgeTick key={y} $y={y} $c="#bcbcbc" />)}
      <Dialog $w={764} $h={726} $m="2px 0 0 6px" $fs={17} $edge="#a6a6a6">
        <TitleBar $h={44} $pl={12} $pr={14} $pb={3}>
          <Fit w={135}>環境変数名の編集</Fit>
          <CloseIcon w={15} h={15} />
        </TitleBar>
        <EditBody>
          <PathList>
            {paths.map(([t, w]) => (
              <PathRow key={t}><Fit w={w}>{t}</Fit></PathRow>
            ))}
            <PathRow $editing>
              <PathEdit>
                <Fit w={127}>C:¥mingw64¥bin</Fit>
                <Caret $h={20} $c="#000" />
              </PathEdit>
            </PathRow>
            {Array.from({ length: 12 }, (_, i) => <PathRow key={i} />)}
          </PathList>
          <SideButtons>
            {side.map(([t, w, h, m]) => (
              <Button key={t} $w={145} $h={h} $m={m}><Fit w={w}>{t}</Fit></Button>
            ))}
          </SideButtons>
        </EditBody>
        <Buttons $gap={16} $m="29px 6px 0 0">
          <Button $w={144} $h={35}><Fit w={24}>OK</Fit></Button>
          <Button $w={145} $h={35}><Fit w={66}>キャンセル</Fit></Button>
        </Buttons>
        <ResizeGrip />
      </Dialog>
    </Screen>
  );
}

const frames = [
  [48, 41, 186, 40],
  [31, 169, 311, 69],
  [1145, 590, 228, 59],
  [1456, 525, 695, 45],
  [1929, 611, 127, 46],
  [2033, 820, 154, 46],
  [1460, 1013, 153, 45],
  [1619, 1163, 239, 150],
  [1867, 1418, 157, 45],
];

export default function App() {
  return (
    <Board>
      <GlobalStyle />
      <SearchScreen />
      <PropertiesScreen />
      <VariablesScreen />
      <EditScreen />

      {frames.map(([x, y, w, h]) => (
        <Frame key={`${x}-${y}`} $x={x} $y={y} $w={w} $h={h} />
      ))}

      <Note x={52} y={23} w={145}>①入力する</Note>
      <Note x={178} y={150} w={203}>②クリックする</Note>
      <Note x={1157} y={564} w={203}>④クリックする</Note>
      <Note x={1767} y={510} w={319}>⑥クリックして選択する</Note>
      <Note x={1932} y={593} w={203}>⑦クリックする</Note>
      <Note x={1994} y={804} w={203}>⑨クリックする</Note>
      <Note x={1462} y={1075}>
        <Fit w={30}>⑩</Fit>
        <Latin><Fit w={17}>“</Fit></Latin>
        <Latin><Fit w={311}>C:¥¥mingw64¥bin</Fit></Latin>
        <Latin><Fit w={18}>”</Fit></Latin>
        <Fit w={144}>と入力する</Fit>
      </Note>
      <Note x={1513} y={1339} w={435}>⑪このあたりを一度クリックする</Note>
      <Note x={1817} y={1400} w={203}>⑫クリックする</Note>

      <Arrow x={357} y={211} w={377} head={36}>③ウィンドウが開く</Arrow>
      <Arrow x={1200} y={675.5} w={291} head={55}>⑤ウィンドウが開く</Arrow>
      <Arrow x={1723} y={685} w={291} head={55} deg={24.6}>⑧ウィンドウが開く</Arrow>
    </Board>
  );
}
